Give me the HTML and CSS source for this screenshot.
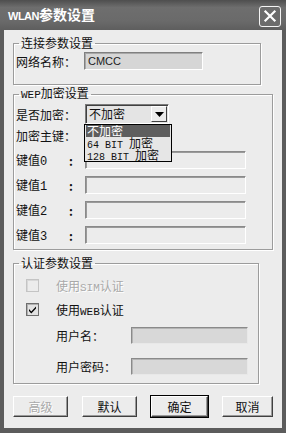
FILE: index.html
```html
<!DOCTYPE html>
<html lang="zh">
<head>
<meta charset="utf-8">
<title>WLAN参数设置</title>
<link rel="stylesheet" href="styles.css">
</head>
<body>
<div class="window">
  <div class="titlebar">
    <span class="title"><span class="title-latin">WLAN</span>参数设置</span>
    <span class="close">
      <svg width="22" height="20" viewBox="0 0 22 20"><path d="M6 5 L16 15 M16 5 L6 15" stroke="#fff" stroke-width="2.4" stroke-linecap="square"/></svg>
    </span>
  </div>
  <div class="body">
    <fieldset class="group g1">
      <legend>连接参数设置</legend>
      <div class="row r-net">
        <span class="label-net">网络名称：</span>
        <span class="field net">CMCC</span>
      </div>
    </fieldset>

    <fieldset class="group g2">
      <legend><span class="latin">WEP</span>加密设置</legend>
      <div class="row r-combo">
        <span class="label">是否加密：</span>
        <span class="combo">
          <span class="combo-text">不加密</span>
          <span class="combo-btn"><svg width="9" height="5" viewBox="0 0 9 5"><path d="M0 0 H9 L4.5 5 Z" fill="#000"/></svg></span>
          <span class="dropdown">
            <span class="opt sel"><span class="cjk">不加密</span></span>
            <span class="opt"><span class="mono">64 BIT </span><span class="cjk">加密</span></span>
            <span class="opt"><span class="mono">128 BIT </span><span class="cjk">加密</span></span>
          </span>
        </span>
      </div>
      <div class="row r-key">
        <span class="label">加密主键：</span>
        <span class="combo"></span>
      </div>
      <div class="row r-val first">
        <span class="klabel">键值<span class="digit">0</span></span><span class="colon">:</span>
        <span class="field key"></span>
      </div>
      <div class="row r-val">
        <span class="klabel">键值<span class="digit">1</span></span><span class="colon">:</span>
        <span class="field key"></span>
      </div>
      <div class="row r-val">
        <span class="klabel">键值<span class="digit">2</span></span><span class="colon">:</span>
        <span class="field key"></span>
      </div>
      <div class="row r-val">
        <span class="klabel">键值<span class="digit">3</span></span><span class="colon">:</span>
        <span class="field key"></span>
      </div>
    </fieldset>

    <fieldset class="group g3">
      <legend>认证参数设置</legend>
      <div class="row r-check first">
        <span class="checkbox disabled"></span>
        <span class="check-text disabled-text">使用<span class="latin">SIM</span>认证</span>
      </div>
      <div class="row r-check second">
        <span class="checkbox checked">
          <svg width="11" height="11" viewBox="0 0 11 11"><path d="M2 5 L4.3 7.5 L9 2.5 L9 4.6 L4.3 9.6 L2 7.1 Z" fill="#000"/></svg>
        </span>
        <span class="check-text">使用<span class="latin">WEB</span>认证</span>
      </div>
      <div class="row r-user first">
        <span class="ulabel">用户名：</span>
        <span class="field user"></span>
      </div>
      <div class="row r-user second">
        <span class="ulabel">用户密码：</span>
        <span class="field user"></span>
      </div>
    </fieldset>

    <div class="buttons">
      <span class="btn b1 disabled-text">高级</span>
      <span class="btn b2">默认</span>
      <span class="btn b3 default">确定</span>
      <span class="btn b4">取消</span>
    </div>
  </div>
</div>
</body>
</html>
```

FILE: styles.css
```css
* { box-sizing: border-box; }
html, body { margin: 0; padding: 0; background: #ffffff; }
body {
  font-family: "Noto Sans CJK SC", "Noto Sans", sans-serif;
  font-size: 12px;
  color: #111;
}
.window {
  width: 286px;
  height: 433px;
  display: flex;
  flex-direction: column;
  background: #5c5c5c;
}
.titlebar {
  height: 30px;
  flex: none;
  display: flex;
  align-items: center;
  justify-content: space-between;
  padding: 0 5px 0 8px;
  background: linear-gradient(#4e4e4e 0, #6e6e6e 25%, #6a6a6a 70%, #5e5e5e 100%);
}
.title {
  color: #fff;
  font-weight: bold;
  font-size: 14px;
  line-height: 16px;
}
.title-latin {
  font-family: "Liberation Sans", sans-serif;
  font-size: 11px;
  letter-spacing: -0.5px;
}
.close {
  width: 22px;
  height: 21px;
  margin-top: 2px;
  border: 1px solid #f4f4f4;
  border-radius: 3px;
  background: #6c6c6c;
  display: flex;
  align-items: center;
  justify-content: center;
}
.close svg { display: block; }
.body {
  flex: 1;
  margin: 0 4px 5px 4px;
  background: #ececec;
  padding: 5px 0 0 9px;
  display: flex;
  flex-direction: column;
}
.group {
  margin: 0;
  min-width: 0;
  border: 1px solid #9c9c9c;
  box-shadow: inset 1px 1px 0 #fff, 1px 1px 0 #fff;
  padding: 1px 0 0 1px;
}
.group legend {
  padding: 0 2px;
  margin-left: 4px;
  font-size: 12px;
  line-height: 16px;
  color: #111;
}
.latin {
  font-family: "Liberation Mono", monospace;
  font-size: 11px;
}
.row { display: flex; align-items: center; }

/* group 1 */
.g1 { width: 248px; padding-bottom: 14px; }
.r-net { height: 18px; padding-left: 1px; }
.label-net { width: 68px; }
.field {
  display: block;
  border: 1px solid;
  border-color: #808080 #ffffff #ffffff #808080;
}
.net {
  width: 119px;
  height: 18px;
  background: #d6d6d6;
  font-family: "Liberation Sans", sans-serif;
  font-size: 11px;
  line-height: 16px;
  padding-left: 3px;
  color: #222;
  box-shadow: inset 1px 1px 0 #a8a8a8;
}

/* group 2 */
.g2 { width: 260px; padding-bottom: 5px; }
.label { width: 70px; padding-left: 1px; }
.r-combo { height: 20px; }
.r-key { height: 20px; margin-top: 1px; }
.combo {
  position: relative;
  width: 84px;
  height: 20px;
  background: #e4e4e4;
  border: 1px solid;
  border-color: #7a7a7a #ffffff #ffffff #7a7a7a;
  box-shadow: inset 1px 1px 0 #404040;
  display: flex;
  align-items: center;
}
.combo-text { flex: 1; padding-left: 3px; line-height: 16px; }
.combo-btn {
  width: 16px;
  height: 16px;
  margin-right: 1px;
  background: #ececec;
  border: 1px solid;
  border-color: #ffffff #404040 #404040 #ffffff;
  display: flex;
  align-items: center;
  justify-content: center;
}
.combo-btn svg { display: block; }
.dropdown {
  position: absolute;
  left: -2px;
  top: 19px;
  width: 88px;
  z-index: 5;
  background: #e6e6e6;
  border: 1px solid #000;
  padding: 0 1px;
}
.opt {
  display: block;
  height: 12px;
  line-height: 12px;
  padding-left: 1px;
  white-space: nowrap;
  color: #111;
}
.opt .cjk {
  font-size: 12px;
  line-height: 12px;
}
.opt .mono {
  font-family: "Liberation Mono", monospace;
  font-size: 10px;
  line-height: 0;
  white-space: pre;
}
.opt.sel { background: #5e5e5e; color: #fff; }
.r-val { height: 18px; margin-top: 7px; }
.r-val.first { margin-top: 6px; }
.klabel { width: 54px; padding-left: 1px; }
.digit { font-family: "Liberation Mono", monospace; font-size: 12px; }
.colon { width: 16px; font-weight: bold; }
.key {
  width: 161px;
  height: 18px;
  background: #ececec;
  border-color: #8a8a8a #ffffff #ffffff #8a8a8a;
  box-shadow: inset 1px 1px 0 #9a9a9a;
}

/* group 3 */
.g3 { width: 246px; margin-top: 5px; padding-bottom: 8px; }
.r-check { height: 16px; padding-left: 11px; }
.r-check.first { margin-top: 5px; }
.r-check.second { margin-top: 8px; }
.checkbox {
  width: 13px;
  height: 13px;
  border: 1px solid #8a8a8a;
  background: #f0f0f0;
  margin-right: 17px;
  display: flex;
  align-items: center;
  justify-content: center;
  box-shadow: inset 1px 1px 0 #b0b0b0;
}
.checkbox.disabled { border-color: #c4c4c4; box-shadow: inset 1px 1px 0 #d8d8d8; background: #ececec; }
.checkbox.checked { background: #e2e2e2; border-color: #6e6e6e; }
.checkbox svg { display: block; }
.disabled-text { color: #a9a9a9; text-shadow: 1px 1px 0 #fff; }
.r-user { height: 17px; padding-left: 41px; }
.r-user.first { margin-top: 10px; }
.r-user.second { margin-top: 14px; }
.ulabel { width: 75px; }
.user {
  width: 117px;
  height: 17px;
  background: #d8d8d8;
  border-color: #8a8a8a #e8e8e8 #e8e8e8 #8a8a8a;
  box-shadow: inset 1px 1px 0 #b4b4b4;
}

/* buttons */
.buttons {
  width: 260px;
  margin-top: 12px;
  display: flex;
  justify-content: space-between;
}
.btn {
  height: 21px;
  display: flex;
  align-items: center;
  justify-content: center;
  background: #ececec;
  border: 1px solid;
  border-color: #ffffff #404040 #404040 #ffffff;
  box-shadow: inset -1px -1px 0 #9a9a9a;
  font-size: 12px;
}
.b1 { width: 55px; }
.b2 { width: 55px; }
.b3 { width: 57px; outline: 1px solid #000; }
.b4 { width: 51px; }
```
